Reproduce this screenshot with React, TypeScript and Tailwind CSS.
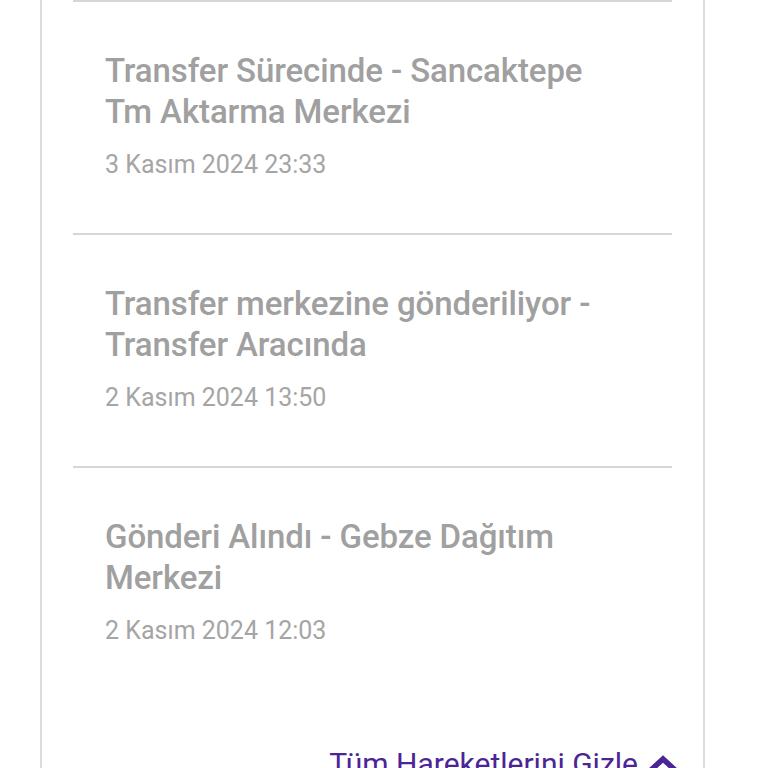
import React from "react";

type Movement = { title: string[]; date: string };

const movements: Movement[] = [
  { title: ["Transfer Sürecinde - Sancaktepe", "Tm Aktarma Merkezi"], date: "3 Kasım 2024 23:33" },
  { title: ["Transfer merkezine gönderiliyor -", "Transfer Aracında"], date: "2 Kasım 2024 13:50" },
  { title: ["Gönderi Alındı - Gebze Dağıtım", "Merkezi"], date: "2 Kasım 2024 12:03" },
];

function MovementRow({ m }: { m: Movement }) {
  return (
    <div className="border-t-2 border-[#d6d6d6] pt-[48px] pb-[54px] px-[32px]">
      <div className="text-[33px] leading-[41px] font-medium text-[#a0a0a0] tracking-[-0.1px]">
        {m.title.map((line, i) => (
          <div key={i} className="whitespace-nowrap">{line}</div>
        ))}
      </div>
      <div className="mt-[19px] text-[25px] leading-[28px] text-[#a5a5a5]">{m.date}</div>
    </div>
  );
}

export default function App() {
  return (
    <div
      className="h-[768px] w-[768px] overflow-hidden bg-white"
      style={{ fontFamily: "Roboto, 'Noto Sans', sans-serif" }}
    >
      <div className="ml-[40px] w-[665px] h-[820px] border-x-2 border-[#dcdcdc]">
        <div className="px-[31px]">
          {movements.map((m, i) => (
            <div key={i} className="-mx-[32px] px-[32px]">
              <MovementRow m={m} />
            </div>
          ))}
          <div className="flex justify-end items-center gap-[10px] -mr-[6px] mt-[48px]">
            <span className="text-[30px] leading-[34px] text-[#4b2596] whitespace-nowrap">Tüm Hareketlerini Gizle</span>
            <svg width="30" height="22" viewBox="0 0 30 22">
              <path d="M3 17 L15 6 L27 17" fill="none" stroke="#4b2596" strokeWidth="5.5" strokeLinejoin="miter" />
            </svg>
          </div>
        </div>
      </div>
    </div>
  );
}
